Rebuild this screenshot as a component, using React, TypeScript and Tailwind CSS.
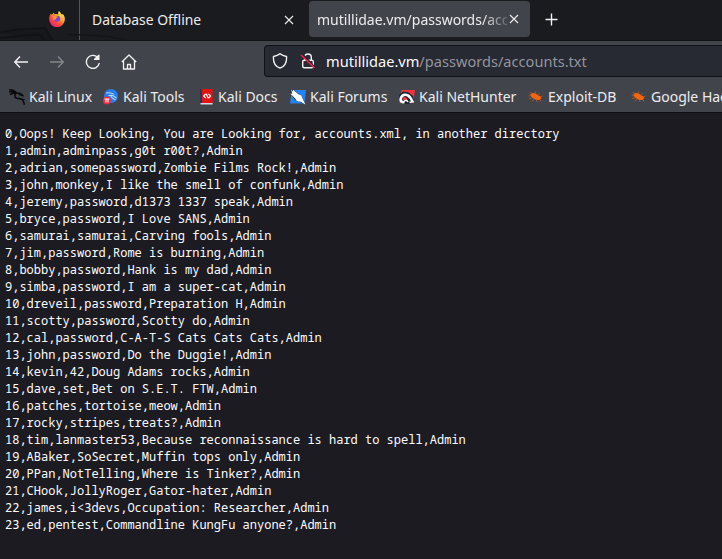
import type { ReactNode } from "react";

const lines = [
  "0,Oops! Keep Looking, You are Looking for, accounts.xml, in another directory",
  "1,admin,adminpass,g0t r00t?,Admin",
  "2,adrian,somepassword,Zombie Films Rock!,Admin",
  "3,john,monkey,I like the smell of confunk,Admin",
  "4,jeremy,password,d1373 1337 speak,Admin",
  "5,bryce,password,I Love SANS,Admin",
  "6,samurai,samurai,Carving fools,Admin",
  "7,jim,password,Rome is burning,Admin",
  "8,bobby,password,Hank is my dad,Admin",
  "9,simba,password,I am a super-cat,Admin",
  "10,dreveil,password,Preparation H,Admin",
  "11,scotty,password,Scotty do,Admin",
  "12,cal,password,C-A-T-S Cats Cats Cats,Admin",
  "13,john,password,Do the Duggie!,Admin",
  "14,kevin,42,Doug Adams rocks,Admin",
  "15,dave,set,Bet on S.E.T. FTW,Admin",
  "16,patches,tortoise,meow,Admin",
  "17,rocky,stripes,treats?,Admin",
  "18,tim,lanmaster53,Because reconnaissance is hard to spell,Admin",
  "19,ABaker,SoSecret,Muffin tops only,Admin",
  "20,PPan,NotTelling,Where is Tinker?,Admin",
  "21,CHook,JollyRoger,Gator-hater,Admin",
  "22,james,i<3devs,Occupation: Researcher,Admin",
  "23,ed,pentest,Commandline KungFu anyone?,Admin",
];

function Firefox() {
  return (
    <svg className="ml-[49px] h-4 w-4 shrink-0" viewBox="0 0 16 16">
      <defs>
        <linearGradient id="fox" x1="0.85" y1="0.1" x2="0.2" y2="0.95">
          <stop offset="0" stopColor="#fff04a" />
          <stop offset="0.35" stopColor="#ffa62b" />
          <stop offset="0.65" stopColor="#ff4a40" />
          <stop offset="1" stopColor="#e9207c" />
        </linearGradient>
      </defs>
      <path fill="url(#fox)" d="M10 0c1.200.9 1.800 1.900 2 3 .6.2 1.200.5 1.600.4.100-.2.100-.4.100-.6 1.500 1.500 2.200 3.500 2.100 5.500A7.800 7.800 0 0 1 .2 8.500C.1 6.400.6 4.400 2 2.300l.3 1.500c.4-.6 1-.9 1.600-1.100l.2-1.300 1.600 1.800c1.300-.5 2.600-.3 3.700.2C8.900 2 9.100.9 10 0z" />
      <circle cx="8.200" cy="7.800" r="3" fill="#7b45e0" />
      <path fill="#ff9c2b" d="M3.500 6.200C4 4.700 6 4.300 7.500 5.200l1.300.2c-.2.900-1.100 1-1.700 1.500-.4.500-.1 1.100-.5 1.500L4.300 9z" />
    </svg>
  );
}

function Close() {
  return (
    <svg className="h-[10px] w-[10px] shrink-0" viewBox="0 0 10 10" stroke="#eeeeef" strokeWidth="1.1">
      <path d="M1 1l8 8M9 1L1 9" />
    </svg>
  );
}

function Dragon() {
  return (
    <svg className="h-4 w-4" viewBox="0 0 16 16" fill="none" stroke="#08090b" strokeLinecap="round">
      <path strokeWidth="1.500" d="M.6 2.800C4 2.600 7 3.400 10 4.600M.8.700c2.500.2 4.500.9 6 2.300M1.500 5.400C3 4.200 5 4.100 6.500 4.600M6.500 5C5.200 7.200 6 9 8 9.300c2.500.2 5 .6 6 2.300.5.900.8 2 1.300 3.600" />
      <path strokeWidth="1.200" d="M9.500 4.300c1.500-.6 3 .3 4.700 2.500M10.500 5.600l3.800 1.400M11.500 10l3.700.5" />
    </svg>
  );
}

function Tools() {
  return (
    <svg className="h-4 w-4" viewBox="0 0 16 16">
      <circle cx="8" cy="7" r="7" fill="#267cf1" />
      <path d="M3 4c3.500-.8 6 0 8 1.400M5.500 6.600c3-1 4.500 0 8 2.400M8 6.500c-.5 2 1.500 2.500 4.500 4.500" fill="none" stroke="#b9d7ff" strokeWidth="1.100" />
      <circle cx="3.900" cy="11.400" r="3.900" fill="#ee2d3c" />
      <path d="M1.500 10h4.800M3 10v3.500M5 10v3.500" stroke="#fff" strokeWidth="1" />
    </svg>
  );
}

function Docs() {
  return (
    <svg className="h-4 w-4" viewBox="0 0 16 16">
      <path fill="#24365c" d="M2 .2h2.500v14H2z" />
      <path fill="#e31313" d="M4 0h10.600v14H4z" />
      <path fill="#d5d9df" d="M2.500 14h12.100v1.500H2.500z" />
      <path fill="none" stroke="#fff" strokeWidth="1.200" d="M7.600 5L5.700 7l2 2M10.500 5l2.100 2-2 2M8.300 4.800l1.800 4.400" />
    </svg>
  );
}

function Forums() {
  return (
    <svg className="h-4 w-4" viewBox="0 0 16 16">
      <path fill="#2682f2" d="M2 1h14l-1.500 13.500H0z" />
      <path fill="#263348" d="M0 0l4 1 8 7 3.500 7.500L5 11 0 4z" />
      <path fill="#fff" d="M1 0l1.600 2.600L3 .7l6 5.100c2 .2 3 1.600 3.400 3.400l3 6.400-4.800-2.900C8 12.500 6 12 5.500 9.700L.2 4.400l2 .4z" />
    </svg>
  );
}

function Hunter() {
  return (
    <svg className="h-4 w-4" viewBox="0 0 16 16">
      <path fill="#f1313e" d="M2.500 1H16l-1.800 13H.5z" />
      <path fill="#202735" d="M0 6l4-3.500 5 .5 5 4 1 5-4 3H4L0 11z" />
      <path fill="none" stroke="#fff" strokeWidth="2.600" d="M5.500 13.300H4C1 12.600.8 9 3.200 6.900c3.500-2.700 8-.5 10 5.600" />
      <path fill="#e93443" d="M3 9.500c2-2.500 4.500-1.500 5.500.5L7 11.500 4 11z" />
      <path fill="none" stroke="#fff" strokeWidth="1.500" d="M5 12.500c1.500-2 3-1.500 4 .5M10.500 13.500l4.500-1" />
    </svg>
  );
}

function Bug() {
  return (
    <svg className="h-4 w-4" viewBox="0 0 16 16" fill="#f2640d">
      <path d="M2.500 5C4.500 3.300 8 4 10 6.200l2.400 1.100.9 2-1.500 1.500C8.500 11.800 4.500 10 2.500 6.800z" />
      <path fill="none" stroke="#b65a2a" strokeWidth=".8" d="M4 5L1.500 3M7 4.500l.5-2M10 6l1.500-2M4 9l-3 .5M6 10l-2 2.500M8.500 11l.5 2M12 10.500l1 2M12.500 8l2-1M2.500 6.500L.5 7" />
    </svg>
  );
}

function Bookmark({ icon, children, className }: { icon: ReactNode; children: ReactNode; className: string }) {
  return (
    <div className={`flex shrink-0 items-center whitespace-nowrap ${className}`}>
      <span className="mr-1 w-4 shrink-0">{icon}</span>
      <span>{children}</span>
    </div>
  );
}

export default function App() {
  return (
    <div className="flex h-[559px] w-[722px] flex-col overflow-hidden bg-[#1c1b22] font-['Noto_Sans',sans-serif] text-sm text-[#ececee]">
      <header className="relative flex h-[41px] shrink-0 items-start border-b border-[#111216] bg-[#1a1b1f]">
        <svg className="absolute left-0 top-0 h-10 w-[180px]" fill="none" viewBox="0 0 180 40">
          <path fill="#17181c" d="M0 32.500l17-3 28-1.500 8 13M0 38l18-2 22-1.500 5 6" stroke="#121317" strokeWidth="2" />
          <path d="M68 34.500c25 0 45 2 60 6" stroke="#141519" strokeWidth="1.500" />
        </svg>
        <div className="flex h-[38px] w-[79px] items-center">
          <Firefox />
        </div>
        <div className="flex h-[40px] w-[230px] items-center border-l border-[#53545b] pl-[12px]">
          <span className="w-[192px] whitespace-nowrap text-[13.900px]">Database Offline</span>
          <Close />
        </div>
        <div className="mt-[1px] flex h-[36px] w-[221px] items-center rounded bg-[#42444b] pl-2">
          <span className="mr-0.5 mt-[2px] w-[190px] overflow-hidden whitespace-nowrap [mask-image:linear-gradient(to_right,#000_165px,transparent_196px)]">mutillidae.vm/passwords/accounts.txt</span>
          <Close />
        </div>
        <svg className="ml-[15px] mt-[13px] h-[13px] w-[13px]" viewBox="0 0 13 13" stroke="#f1f1f2" strokeWidth="1.400">
          <path d="M6.500.5v12M.5 6.500h12" />
        </svg>
      </header>
      <nav className="flex h-[41px] shrink-0 items-center overflow-hidden bg-[#42444b] pt-[1px] text-[#f2f2f3]">
        <svg className="ml-[14px] h-[14px] w-[14px] shrink-0" viewBox="0 0 14 14" fill="none" stroke="currentColor" strokeWidth="1.400"><path d="M6 1.500L.8 7 6 12.500M1 7h13" /></svg>
        <svg className="ml-[22px] h-[14px] w-[14px] shrink-0 text-[#85868b]" viewBox="0 0 14 14" fill="none" stroke="currentColor" strokeWidth="1.400"><path d="M8 1.500L13.200 7 8 12.500M13 7H0" /></svg>
        <svg className="ml-[21px] h-4 w-4 shrink-0" viewBox="0 0 16 16" fill="none" stroke="currentColor" strokeWidth="1.400"><path d="M12.500 3.300A6.500 6.500 0 1 0 14.300 9" /><path fill="currentColor" stroke="none" d="M9 6V5l4-4 1.500-.5V6z" /></svg>
        <svg className="ml-[20px] h-4 w-4 shrink-0" viewBox="0 0 16 16" fill="none" stroke="currentColor" strokeWidth="1.300" strokeLinejoin="round"><path d="M2.500 7v8h11V7M.8 8L8 1l7.200 7M6.500 15v-4.500h3V15" /></svg>
        <div className="-mt-[2px] ml-[127px] flex h-[32px] w-[470px] shrink-0 items-center rounded-l border border-r-0 border-[#101218] bg-[#272933] pl-[7px]">
          <svg className="h-4 w-4 shrink-0" viewBox="0 0 16 16" fill="none" stroke="currentColor" strokeWidth="1.400"><path d="M8 .8c2 1.700 4 2.300 6.500 2.700C15 9 12.500 13.500 8 15.200 3.500 13.500 1 9 1.500 3.500 4 3.100 6 2.500 8 .8z" /></svg>
          <svg className="ml-3 h-4 w-4 shrink-0" viewBox="0 0 16 16" fill="none" stroke="currentColor" strokeWidth="1.400"><rect x="2.700" y="7.200" width="10.600" height="7.600" rx="1.500" /><path d="M4.700 7V4.300a3.300 3.300 0 0 1 6.600 0V7" /><path stroke="#272933" strokeWidth="2.500" d="M2 1l13 14" /><path stroke="#ff1f50" strokeWidth="1.500" d="M1 2l13.500 13" /></svg>
          <span className="ml-[10px] whitespace-nowrap text-[14.6px] text-[#94959d]"><span className="text-[#fbfbfe]">mutillidae.vm</span>/passwords/accounts.txt</span>
        </div>
      </nav>
      <nav className="flex h-[31px] shrink-0 items-center overflow-hidden border-b border-[#0d0c12] bg-[#42444b] pb-[1px] pl-[9px]">
        <Bookmark className="w-[94px]" icon={<Dragon />}>Kali Linux</Bookmark>
        <Bookmark className="w-[95px]" icon={<Tools />}>Kali Tools</Bookmark>
        <Bookmark className="w-[92px]" icon={<Docs />}>Kali Docs</Bookmark>
        <Bookmark className="w-[109px]" icon={<Forums />}>Kali Forums</Bookmark>
        <Bookmark className="w-[129px]" icon={<Hunter />}>Kali NetHunter</Bookmark>
        <Bookmark className="w-[103px]" icon={<Bug />}>Exploit-DB</Bookmark>
        <Bookmark className="w-[180px]" icon={<Bug />}>Google Hacking DB</Bookmark>
      </nav>
      <main className="px-[5px] pt-[12px]">
        <pre className="font-['Noto_Sans_Mono','DejaVu_Sans_Mono',monospace] text-[12px] leading-[17px] text-[#fbfbfe]">{lines.join("\n")}</pre>
      </main>
    </div>
  );
}
